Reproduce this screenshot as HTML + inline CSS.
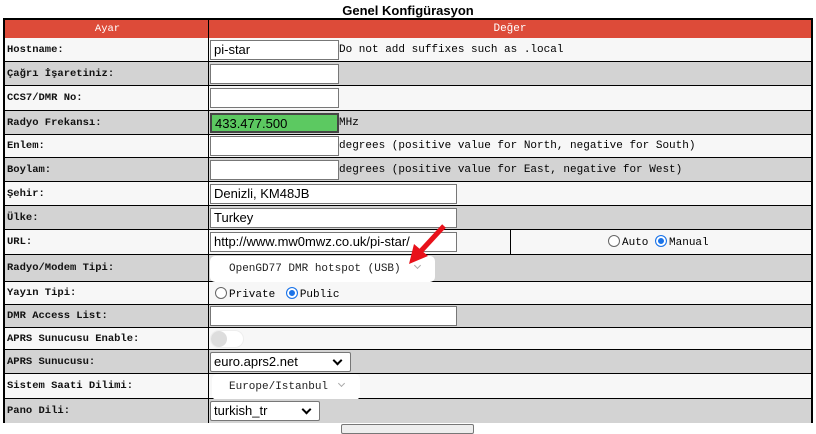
<!DOCTYPE html>
<html><head><meta charset="utf-8"><style>
*{box-sizing:border-box;margin:0;padding:0}
body{width:816px;height:429px;background:#fff;position:relative;overflow:hidden;font-family:"Liberation Mono",monospace;font-size:11px;color:#000}
.a{position:absolute}
.t{left:0;width:816px;top:3px;text-align:center;font:bold 13px "Liberation Sans",sans-serif}
.tbl{left:3px;top:18px;width:810px;height:405px;border:2px solid #000;background:#000}
.r{position:absolute;left:0;width:806px}
.l{position:absolute;left:0;width:203px;top:0;bottom:1px;padding-left:2px;display:flex;align-items:center;font-weight:bold;font-size:10.5px;color:#111}
.v{position:absolute;left:204px;right:0;top:0;bottom:1px;display:flex;align-items:center}
.w .l,.w .v{background:#f7f7f7}
.g .l,.g .v{background:#d3d3d3}
.in{position:absolute;height:20px;background:#fff;border:1px solid #777;font:13px "Liberation Sans",sans-serif;padding-left:3px;line-height:18px}
.sel{position:absolute;height:20px;background:#fff;border:1px solid #777;border-radius:2px;font:13px "Liberation Sans",sans-serif;padding-left:3px;line-height:18px}
.sel:after{content:"";position:absolute;right:9px;top:4px;width:5px;height:5px;border-right:2px solid #000;border-bottom:2px solid #000;transform:rotate(45deg)}
.fs{position:absolute;height:26px;background:#fff;border-radius:5px;font:11px "Liberation Mono",monospace;line-height:26px;color:#222}
.chev{display:inline-block;width:5px;height:5px;border-right:1.5px solid #aaa;border-bottom:1.5px solid #aaa;transform:rotate(45deg);vertical-align:3px}
.rad{display:inline-block;width:12px;height:12px;border-radius:50%;border:1px solid #666;background:#fff;vertical-align:-2px;margin-right:2px}
.on{border:1px solid #1a73e8;box-shadow:inset 0 0 0 2px #fff;background:#1a73e8}
</style></head><body>
<div class="a t">Genel Konfigürasyon</div>
<div class="a tbl">
<div class="r" style="top:0;height:18px"><div class="l" style="background:#dd4b39;color:#fff;justify-content:center;bottom:0;font-weight:normal">Ayar</div><div class="v" style="background:#dd4b39;color:#fff;justify-content:center;bottom:0">Değer</div></div>
<div class="r w" style="top:18px;height:24px"><div class="l">Hostname:</div><div class="v"><span style="margin-left:130px">Do not add suffixes such as .local</span></div><div class="in" style="left:205px;top:2px;width:129px">pi-star</div></div>
<div class="r g" style="top:42px;height:24px"><div class="l">Çağrı İşaretiniz:</div><div class="v"></div><div class="in" style="left:205px;top:2px;width:129px"></div></div>
<div class="r w" style="top:66px;height:25px"><div class="l">CCS7/DMR No:</div><div class="v"></div><div class="in" style="left:205px;top:2px;width:129px"></div></div>
<div class="r g" style="top:91px;height:24px"><div class="l">Radyo Frekansı:</div><div class="v"><span style="margin-left:130px">MHz</span></div><div class="in" style="left:205px;top:2px;width:129px;background:#5cc961;border:2px solid #444">433.477.500</div></div>
<div class="r w" style="top:115px;height:23px"><div class="l">Enlem:</div><div class="v"><span style="margin-left:130px">degrees (positive value for North, negative for South)</span></div><div class="in" style="left:205px;top:1px;width:129px"></div></div>
<div class="r g" style="top:138px;height:24px"><div class="l">Boylam:</div><div class="v"><span style="margin-left:130px">degrees (positive value for East, negative for West)</span></div><div class="in" style="left:205px;top:2px;width:129px"></div></div>
<div class="r w" style="top:162px;height:24px"><div class="l">Şehir:</div><div class="v"></div><div class="in" style="left:205px;top:2px;width:247px">Denizli, KM48JB</div></div>
<div class="r g" style="top:186px;height:24px"><div class="l">Ülke:</div><div class="v"></div><div class="in" style="left:205px;top:2px;width:247px">Turkey</div></div>
<div class="r w" style="top:210px;height:25px"><div class="l">URL:</div><div class="v"></div><div class="a" style="left:505px;top:0;width:1px;height:24px;background:#000"></div><div class="in" style="left:205px;top:2px;width:247px">http://www.mw0mwz.co.uk/pi-star/</div><div class="a" style="left:603px;top:5px"><span class="rad"></span>Auto <span class="rad on"></span>Manual</div></div>
<div class="r g" style="top:235px;height:27px"><div class="l">Radyo/Modem Tipi:</div><div class="v"></div><div class="fs" style="left:205px;top:1px;width:225px;padding-left:19px">OpenGD77 DMR hotspot (USB) <span class="chev" style="margin-left:8px"></span></div></div>
<div class="r w" style="top:262px;height:23px"><div class="l">Yayın Tipi:</div><div class="v"></div><div class="a" style="left:210px;top:5px"><span class="rad"></span>Private <span class="rad on" style="margin-left:4px"></span>Public</div></div>
<div class="r g" style="top:285px;height:23px"><div class="l">DMR Access List:</div><div class="v"></div><div class="in" style="left:205px;top:1px;width:247px"></div></div>
<div class="r w" style="top:308px;height:22px"><div class="l">APRS Sunucusu Enable:</div><div class="v"></div><div class="a" style="left:205px;top:2px;width:34px;height:18px;border-radius:9px;background:#fff;border:1px solid #eee"><div style="width:16px;height:16px;border-radius:50%;background:#ddd"></div></div></div>
<div class="r g" style="top:330px;height:24px"><div class="l">APRS Sunucusu:</div><div class="v"></div><div class="sel" style="left:205px;top:2px;width:141px">euro.aprs2.net</div></div>
<div class="r w" style="top:354px;height:25px"><div class="l">Sistem Saati Dilimi:</div><div class="v"></div><div class="fs" style="left:207px;top:0;width:148px;padding-left:17px">Europe/Istanbul <span class="chev" style="margin-left:4px"></span></div></div>
<div class="r g" style="top:379px;height:24px"><div class="l" style="bottom:0">Pano Dili:</div><div class="v" style="bottom:0"></div><div class="sel" style="left:205px;top:2px;width:110px">turkish_tr</div></div>
</div>
<div class="a" style="left:341px;top:424px;width:133px;height:10px;border:1px solid #777;background:#eee;border-radius:2px"></div>
<svg class="a" style="left:400px;top:222px" width="50" height="45"><line x1="44" y1="4" x2="20" y2="30" stroke="#e8111a" stroke-width="5"/><polygon points="9,42 14,22 28,34" fill="#e8111a"/></svg>
</body></html>
